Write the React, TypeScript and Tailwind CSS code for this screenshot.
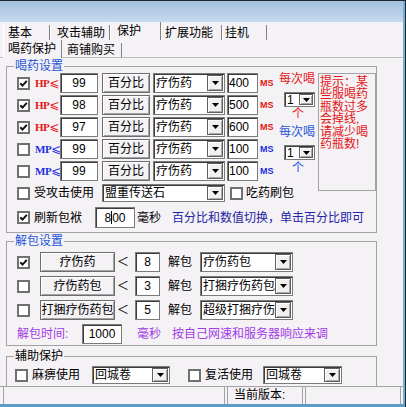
import React from 'react';

const SUNKEN = 'bg-white border border-[#7b7b7b] shadow-[inset_1px_1px_0_#3c3c3c]';
const RAISED = 'bg-[#f4f2f4] border border-[#6d6d6d] shadow-[inset_1px_1px_0_#ffffff,inset_-1px_-1px_0_#a3a3a3]';
const RED = 'text-[#e31515]';
const BLUE = 'text-[#1f55d8]';
const NAVY = 'text-[#2323a6]';
const PURPLE = 'text-[#a13ce6]';

function Check({ on = false }: { on?: boolean }) {
  return (
    <span className="w-[13px] h-[13px] shrink-0 border-2 border-[#707070] bg-white flex items-center justify-center">
      {on && (
        <svg width="9" height="9" viewBox="0 0 9 9">
          <path d="M1.3 4.3 L3.5 6.6 L7.8 1.8" stroke="#111" strokeWidth="2" fill="none" />
        </svg>
      )}
    </span>
  );
}

function Arrow({ className = 'w-[16px]' }: { className?: string }) {
  return (
    <span
      className={`${className} shrink-0 border border-[#5f5f5f] bg-[#f1f0ee] shadow-[inset_1px_1px_0_#ffffff,inset_-1px_-1px_0_#a9a9a9] flex items-center justify-center`}
    >
      <svg width="7" height="4" viewBox="0 0 7 4">
        <path d="M0 0H7L3.5 4Z" fill="#000" />
      </svg>
    </span>
  );
}

function Combo({ text, className }: { text: string; className: string }) {
  return (
    <div className={`flex p-[1px] ${SUNKEN} ${className}`}>
      <span className="flex-1 min-w-0 overflow-hidden whitespace-nowrap self-center leading-[14px] pl-[1px]">{text}</span>
      <Arrow />
    </div>
  );
}

function SmallCombo({ className }: { className: string }) {
  return (
    <div className={`w-[31px] h-[15px] flex p-[1px] ${SUNKEN} ${className}`}>
      <span className="flex-1 self-center leading-[12px] pl-[1px]">1</span>
      <Arrow className="w-[14px]" />
    </div>
  );
}

function Tab({ label, className, active = false }: { label: string; className: string; active?: boolean }) {
  return (
    <div
      className={`${className} ${active ? 'h-[18px]' : 'h-[15px]'} shrink-0 border-l border-l-white border-r border-r-[#808080] flex items-center whitespace-nowrap leading-[14px]`}
    >
      {label}
    </div>
  );
}

const drinkRows = [
  { on: true, kind: 'HP', v: '99', ms: '400' },
  { on: true, kind: 'HP', v: '98', ms: '500' },
  { on: true, kind: 'HP', v: '97', ms: '600' },
  { on: false, kind: 'MP', v: '99', ms: '100' },
  { on: false, kind: 'MP', v: '99', ms: '100' },
];

const unpackRows = [
  { on: true, item: '疗伤药', n: '8', target: '疗伤药包' },
  { on: false, item: '疗伤药包', n: '3', target: '打捆疗伤药包' },
  { on: false, item: '打捆疗伤药包', n: '5', target: '超级打捆疗伤药包' },
];

const tipLines = ['提示：某', '些服喝药', '瓶数过多', '会掉线,', '请减少喝', '药瓶数!'];

function DrinkGroup() {
  return (
    <fieldset className="ml-[6px] w-[371px] border border-[#a3a3a3] pl-[10px] pb-[4px]">
      <legend className={`-ml-[3px] px-[1px] leading-[14px] ${BLUE}`}>喝药设置</legend>
      <div className="flex">
        <div className="w-[299px] flex flex-col">
          <div className="flex">
            <div className="w-[259px] flex flex-col gap-[2px]">
              {drinkRows.map((r, i) => {
                const c = r.kind === 'HP' ? RED : 'text-[#1b2ee0]';
                return (
                  <div key={i} className="h-[20px] flex items-center">
                    <Check on={r.on} />
                    <span className={`ml-[5px] w-[24px] flex items-center ${c}`}>
                      <span className="font-['Liberation_Serif'] font-bold text-[11px] leading-none tracking-[-0.5px]">{r.kind}</span>
                      <span className="font-['DejaVu_Sans'] text-[12px] leading-none">⩽</span>
                    </span>
                    <span className={`ml-[1px] w-[38px] h-full flex items-center justify-center leading-[14px] ${SUNKEN}`}>{r.v}</span>
                    <span className={`ml-[4px] w-[48px] h-full flex items-center justify-center leading-[14px] ${RAISED}`}>百分比</span>
                    <Combo text="疗伤药" className="ml-[3px] w-[72px] h-full" />
                    <span className={`ml-[2px] w-[31px] h-full flex items-center pl-[1px] leading-[14px] ${SUNKEN}`}>{r.ms}</span>
                    <span className={`ml-[2px] font-bold text-[9px] leading-none ${c}`}>MS</span>
                  </div>
                );
              })}
            </div>
            <div className="w-[40px] flex flex-col items-start">
              <span className={`ml-[3px] leading-[13px] ${RED}`}>每次喝</span>
              <SmallCombo className="ml-[8px] mt-[6px]" />
              <span className={`ml-[16px] mt-[1px] leading-[13px] ${RED}`}>个</span>
              <span className={`ml-[3px] mt-[5px] leading-[13px] ${BLUE}`}>每次喝</span>
              <SmallCombo className="ml-[8px] mt-[6px]" />
              <span className={`ml-[16px] mt-[2px] leading-[13px] ${BLUE}`}>个</span>
            </div>
          </div>
          <div className="mt-[3px] h-[18px] flex items-center">
            <Check />
            <span className="ml-[4px] leading-[14px]">受攻击使用</span>
            <Combo text="盟重传送石" className="ml-[8px] w-[123px] h-full" />
            <span className="ml-[5px]">
              <Check />
            </span>
            <span className="ml-[3px] leading-[14px]">吃药刷包</span>
          </div>
        </div>
        <div className={`ml-[2px] w-[58px] h-[118px] border border-[#a3a3a3] pl-[1px] pt-[2px] flex flex-col ${RED}`}>
          {tipLines.map((t) => (
            <div key={t} className="h-[12.4px] leading-[12.4px] whitespace-nowrap">
              {t}
            </div>
          ))}
        </div>
      </div>
      <div className="mt-[5px] h-[21px] flex items-center">
        <Check on />
        <span className="ml-[4px] leading-[14px]">刷新包袱</span>
        <span className={`ml-[13px] w-[40px] h-full flex items-center justify-center leading-[14px] ${SUNKEN}`}>
          8<span className="inline-block w-px h-[13px] bg-black" />00
        </span>
        <span className="ml-[2px] leading-[14px]">毫秒</span>
        <span className={`ml-[11px] leading-[14px] whitespace-nowrap ${NAVY}`}>百分比和数值切换，单击百分比即可</span>
      </div>
    </fieldset>
  );
}

function UnpackGroup() {
  return (
    <fieldset className="mt-[1px] ml-[6px] w-[371px] border border-[#a3a3a3] pl-[10px] pt-[4px] pb-[1px]">
      <legend className={`-ml-[3px] px-[1px] leading-[14px] ${BLUE}`}>解包设置</legend>
      <div className="flex flex-col gap-[4px]">
        {unpackRows.map((r, i) => (
          <div key={i} className="h-[20px] flex items-center">
            <Check on={r.on} />
            <span className={`ml-[10px] w-[75px] h-full flex items-center justify-center whitespace-nowrap leading-[14px] ${RAISED}`}>{r.item}</span>
            <span className="ml-[2px] w-[12px] text-[12px] leading-[14px] text-center">＜</span>
            <span className={`ml-[6px] w-[25px] h-full flex items-center justify-center leading-[14px] ${SUNKEN}`}>{r.n}</span>
            <span className="ml-[8px] leading-[14px]">解包</span>
            <Combo text={r.target} className="ml-[8px] w-[93px] h-full" />
          </div>
        ))}
        <div className="h-[20px] flex items-center">
          <span className={`w-[65px] leading-[14px] ${PURPLE}`}>解包时间:</span>
          <span className={`w-[40px] h-full flex items-center justify-center leading-[14px] ${SUNKEN}`}>1000</span>
          <span className={`ml-[15px] leading-[14px] ${PURPLE}`}>毫秒</span>
          <span className={`ml-[11px] leading-[14px] whitespace-nowrap ${PURPLE}`}>按自己网速和服务器响应来调</span>
        </div>
      </div>
    </fieldset>
  );
}

function AssistGroup() {
  return (
    <fieldset className="mt-[3px] ml-[6px] w-[371px] border border-b-0 border-[#a3a3a3] pl-[8px] pt-[3px] flex-1">
      <legend className="-ml-[1px] px-[1px] leading-[14px]">辅助保护</legend>
      <div className="h-[18px] flex items-center">
        <Check />
        <span className="ml-[4px] leading-[14px]">麻痹使用</span>
        <Combo text="回城卷" className="ml-[12px] w-[78px] h-full" />
        <span className="ml-[18px]">
          <Check />
        </span>
        <span className="ml-[4px] leading-[14px]">复活使用</span>
        <Combo text="回城卷" className="ml-[10px] w-[79px] h-full" />
      </div>
    </fieldset>
  );
}

export default function App() {
  return (
    <div className="w-[406px] h-[407px] flex flex-col bg-[#1c2834] text-[12px] text-black font-['Liberation_Sans','Noto_Sans_CJK_SC',sans-serif] overflow-hidden select-none">
      <div className="flex mt-[1px] h-[403px]">
        <div className="w-[403px] flex flex-col bg-[#f5f2f5]">
          <div className="h-[21px] shrink-0 bg-linear-to-b from-[#a2bedd] to-[#c8daee]" />

          <div className="h-[18px] shrink-0 flex items-end pl-[3px]">
            <Tab label="基本" className="w-[47px] pl-[4px]" />
            <Tab label="攻击辅助" className="w-[60px] pl-[6px]" />
            <Tab label="保护" className="w-[51px] pl-[6px]" active />
            <Tab label="扩展功能" className="w-[61px] pl-[3px]" />
            <Tab label="挂机" className="w-[45px] pl-[2px]" />
          </div>

          <div className="h-[18px] shrink-0 flex items-end">
            <div className="w-[3px] h-full border-b border-[#bdbdbd]" />
            <Tab label="喝药保护" className="w-[59px] pl-[4px]" active />
            <div className="h-[15px] w-[60px] shrink-0 border-r border-r-[#808080] border-b border-b-[#bdbdbd] pl-[5px] flex items-center leading-[14px]">
              商铺购买
            </div>
            <div className="flex-1 h-full border-b border-[#bdbdbd]" />
          </div>

          <div className="flex-1 min-h-0 flex flex-col pt-[1px]">
            <DrinkGroup />
            <UnpackGroup />
            <AssistGroup />
          </div>

          <div className="h-[18px] shrink-0 border-t border-[#a3a3a3] flex pl-[3px]">
            <div className="w-[222px] border-l border-r border-[#a3a3a3]" />
            <div className="ml-[2px] w-[76px] border-l border-r border-[#a3a3a3] pl-[6px] leading-[16px]">当前版本:</div>
            <div className="ml-[2px] w-[96px] border-l border-r border-[#a3a3a3]" />
          </div>
        </div>
        <div className="w-[2px] bg-[#78aed6]" />
      </div>
      <div className="h-[3px] mr-[1px] bg-[#5b9dc4]" />
    </div>
  );
}
